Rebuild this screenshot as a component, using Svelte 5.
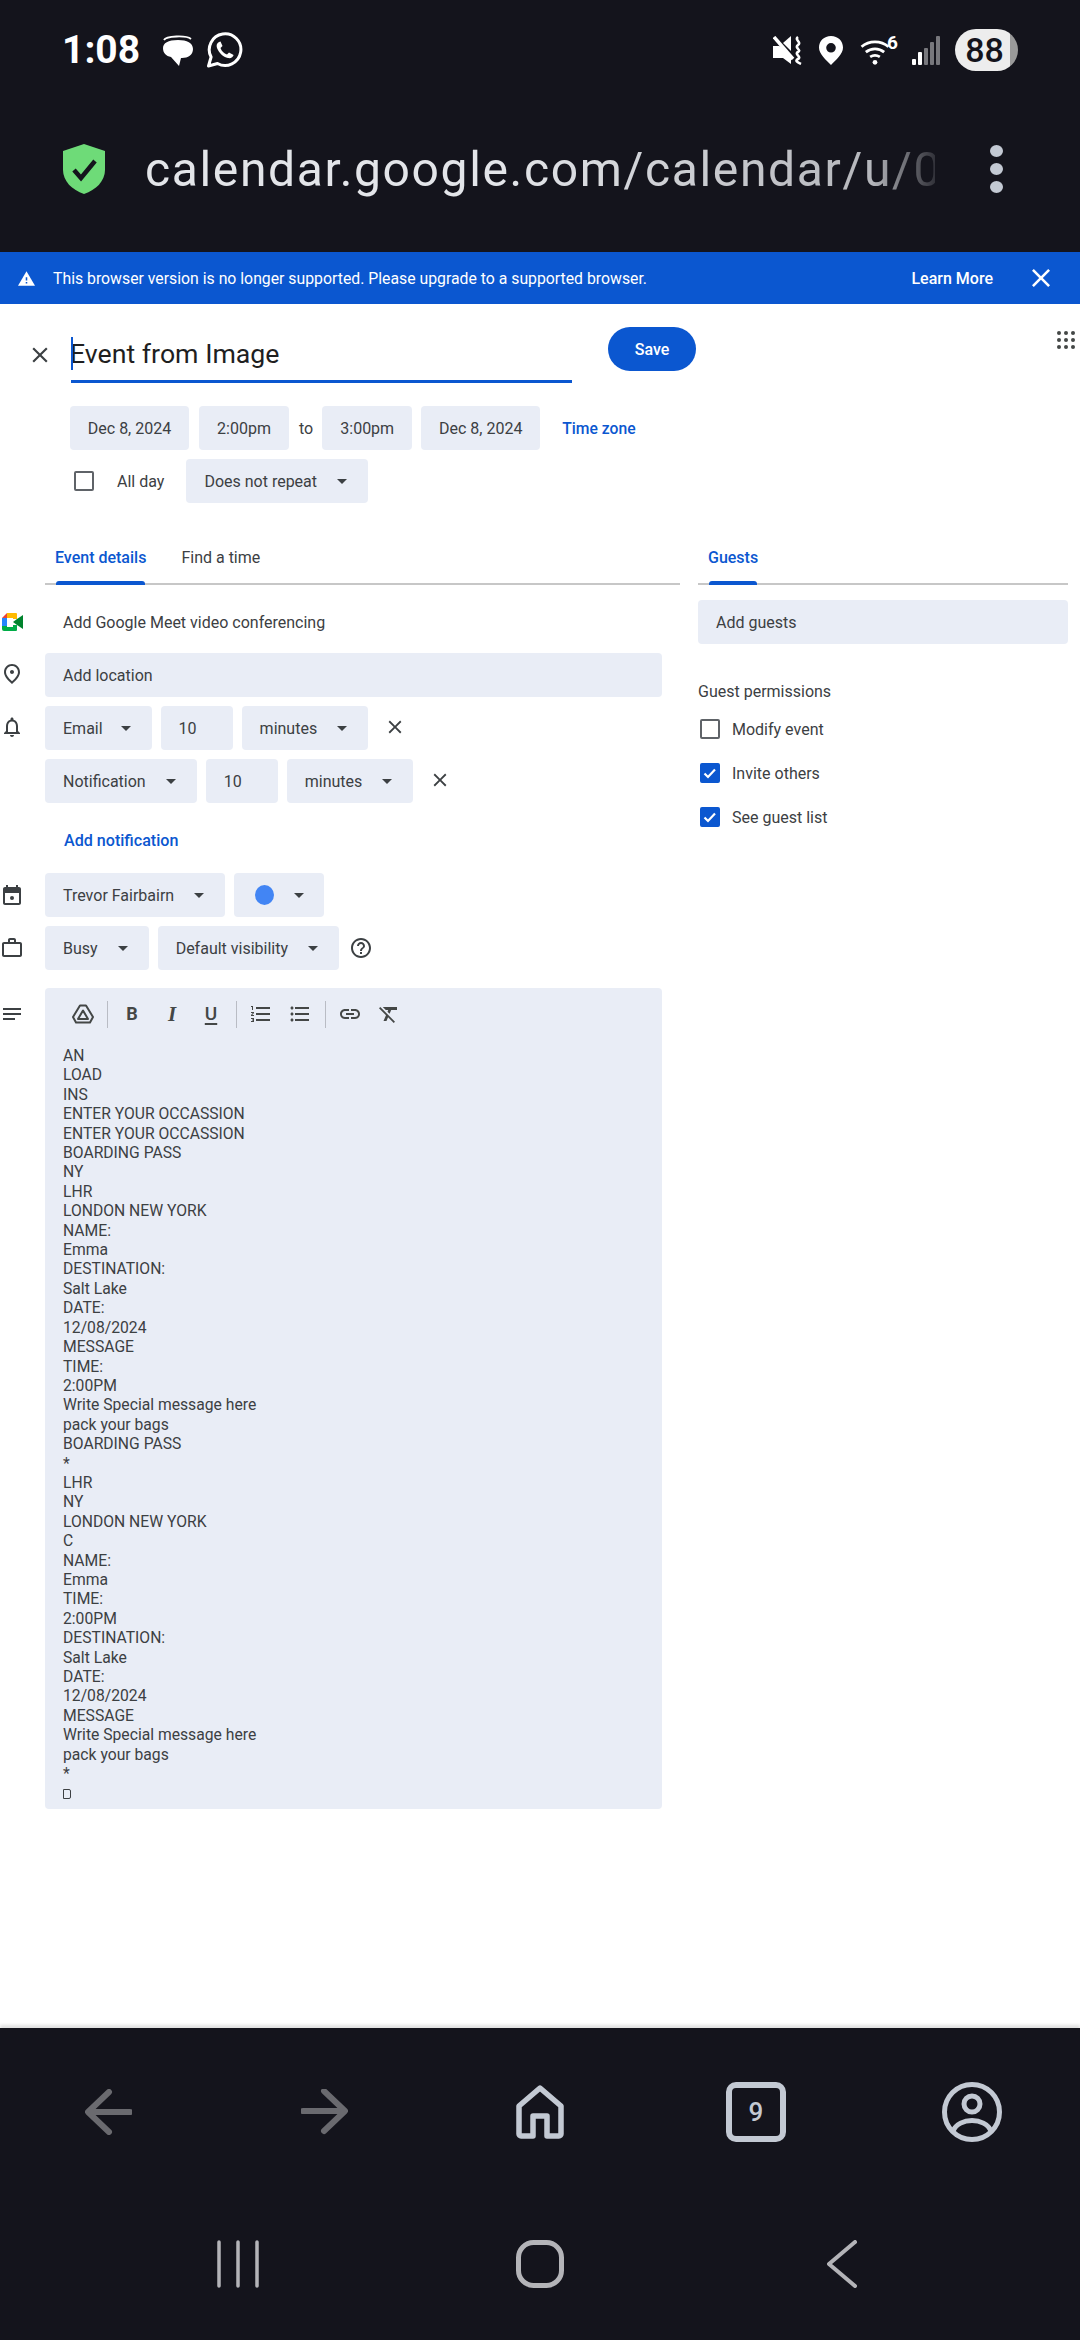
<script>
  const bodyLines = [
    "AN", "LOAD", "INS", "ENTER YOUR OCCASSION", "ENTER YOUR OCCASSION", "BOARDING PASS", "NY", "LHR",
    "LONDON NEW YORK", "NAME:", "Emma", "DESTINATION:", "Salt Lake", "DATE:", "12/08/2024", "MESSAGE",
    "TIME:", "2:00PM", "Write Special message here", "pack your bags", "BOARDING PASS", "*", "LHR", "NY",
    "LONDON NEW YORK", "C", "NAME:", "Emma", "TIME:", "2:00PM", "DESTINATION:", "Salt Lake", "DATE:",
    "12/08/2024", "MESSAGE", "Write Special message here", "pack your bags", "*"
  ];

  const guestPerms = [
    { label: "Modify event", checked: false },
    { label: "Invite others", checked: true },
    { label: "See guest list", checked: true }
  ];

  const closePath = "M19 6.41L17.59 5 12 10.59 6.41 5 5 6.41 10.59 12 5 17.59 6.41 19 12 13.41 17.59 19 19 17.59 13.41 12z";
</script>

<div class="screen">
  <header class="top">
    <div class="status">
      <span class="time">1:08</span>
      <svg class="chat" viewBox="0 0 35 34" width="35" height="34">
        <path d="M4 6C6 2 26 1 31 5" fill="none" stroke="#fff" stroke-width="1.800" />
        <path d="M3 14C3 9 8 6 18 6c9 0 15 3 15 9 0 6-5 9-11 9h-1l-2 8-8-9C6 22 3 19 3 14z" fill="#fff" />
      </svg>
      <svg class="wa" viewBox="0 0 37 36" width="37" height="36">
        <path d="M2.500 34l2.600-9A15.800 15.800 0 1 1 11.500 31.500z" fill="none" stroke="#fff" stroke-width="3" stroke-linejoin="round" />
        <path d="M13 10c-2 1-3 3-2 6 2 5 6 9 11 10 3 .6 5-1 5.600-3l-4.600-2.500-2 2c-3-1-5.500-3.500-6.500-6.500l2-2-2-4.500z" fill="#fff" />
      </svg>
      <div class="status-right">
        <svg viewBox="0 0 29 29" width="29" height="29">
          <path d="M0 10h6l3 1 9 10v7l-8-6H0z" fill="#fff" />
          <path d="M10 7l8-7v15z" fill="#fff" />
          <path d="M1 1l19 22" stroke="#fff" stroke-width="3.500" />
          <path d="M25 1c-4 3 4 5 0 8s4 5 0 7 4 5 0 7 1 4 3 5" fill="none" stroke="#fff" stroke-width="2.600" />
        </svg>
        <svg viewBox="0 0 24 29" width="24" height="29">
          <path fill-rule="evenodd" d="M12 0c7 0 12 5 12 11.500C24 18 17 24 12 29 7 24 0 18 0 11.500 0 5 5 0 12 0zm0 7a4.800 4.800 0 1 0 0 9.600A4.800 4.800 0 0 0 12 7z" fill="#fff" />
        </svg>
        <div class="wifi">
          <svg viewBox="0 0 27 26" width="30" height="28">
            <path d="M1 9c7-6 18-6 25 0M5 14c5-4 12-4 17 0M9 18.500c3-2 6-2 9 0" fill="none" stroke="#fff" stroke-width="2.600" />
            <circle cx="13.500" cy="23.500" r="2.200" fill="#fff" />
          </svg>
          <span>6</span>
        </div>
        <div class="signal">
          <i style="height:6px;background:#fff"></i>
          <i style="height:13px;background:#fff"></i>
          <i style="height:17px"></i>
          <i style="height:23px"></i>
          <i style="height:29px"></i>
        </div>
        <div class="battery">88</div>
      </div>
    </div>
    <div class="urlbar">
      <svg viewBox="0 0 42 50" width="42" height="50">
        <path d="M21 0l21 7v19c0 11-9 20-21 24C9 46 0 37 0 26V7z" fill="#6edb78" />
        <path d="M11 26l7 8 14-17" fill="none" stroke="#14141c" stroke-width="4.500" />
      </svg>
      <div class="url">calendar.google.com/calendar/u/0</div>
      <div class="dots"><i></i><i></i><i></i></div>
    </div>
  </header>

  <div class="banner">
    <svg viewBox="1 2 22 19" width="17" height="15">
      <path d="M1 21h22L12 2 1 21z" fill="#fff" />
      <path d="M13 18h-2v-2h2v2zm0-4h-2v-4h2v4z" fill="#0b57d0" />
    </svg>
    <span class="banner-text">This browser version is no longer supported. Please upgrade to a supported browser.</span>
    <span class="learn">Learn More</span>
    <svg viewBox="5 5 14 14" width="18" height="18"><path d={closePath} fill="#fff" /></svg>
  </div>

  <main class="editor">
    <div class="head">
      <div class="close">
        <svg viewBox="0 0 24 24" width="26" height="26"><path d={closePath} fill="#3c4043" /></svg>
      </div>
      <div class="title">
        <span class="cursor"></span>
        Event from Image
      </div>
      <button class="save">Save</button>
      <svg class="apps" viewBox="0 0 18 18" width="18" height="18">
        {#each [2, 9, 16] as y}
          {#each [2, 9, 16] as x}
            <circle cx={x} cy={y} r="2" fill="#444746" />
          {/each}
        {/each}
      </svg>
    </div>

    <div class="dates">
      <div class="chip date">Dec 8, 2024</div>
      <div class="chip hour">2:00pm</div>
      <span class="to">to</span>
      <div class="chip hour">3:00pm</div>
      <div class="chip date">Dec 8, 2024</div>
      <span class="link tz">Time zone</span>
    </div>

    <div class="allday">
      <span class="check"></span>
      <span class="allday-label">All day</span>
      <div class="chip select">Does not repeat <b class="caret"></b></div>
    </div>

    <div class="cols">
      <section class="left">
        <div class="tabs">
          <span class="tab active">Event details</span>
          <span class="tab">Find a time</span>
        </div>

        <div class="row first">
          <div class="gut">
            <svg viewBox="0 0 21 18" width="21" height="18">
              <path d="M0 5l5-5v5z" fill="#ea4335" />
              <path d="M0 5h5v8H0z" fill="#2684fc" />
              <path d="M5 0h9a1 1 0 0 1 1 1v5h-4V5H5z" fill="#ffba00" />
              <path d="M0 13h5v1h6v-2h4v5a1 1 0 0 1-1 1H2a2 2 0 0 1-2-2z" fill="#00ac47" />
              <path d="M11 9l4-3 6-4v14l-6-4z" fill="#00832d" />
            </svg>
          </div>
          <span class="plain">Add Google Meet video conferencing</span>
        </div>

        <div class="row">
          <div class="gut up">
            <svg viewBox="0 0 24 24" width="24" height="24"><path d="M12 12c-1.100 0-2-.9-2-2s.9-2 2-2 2 .9 2 2-.9 2-2 2zm6-1.800C18 6.570 15.350 4 12 4s-6 2.570-6 6.200c0 2.340 1.950 5.440 6 9.140 4.050-3.700 6-6.800 6-9.140zM12 2c4.200 0 8 3.220 8 8.200 0 3.320-2.670 7.250-8 11.800-5.330-4.550-8-8.480-8-11.800C4 5.220 7.800 2 12 2z" fill="#3c4043" /></svg>
          </div>
          <div class="chip wide">Add location</div>
        </div>

        <div class="row">
          <div class="gut up">
            <svg viewBox="0 0 24 24" width="24" height="24"><path d="M12 22c1.100 0 2-.9 2-2h-4c0 1.100.9 2 2 2zm6-6v-5c0-3.070-1.630-5.640-4.500-6.320V4c0-.83-.67-1.500-1.500-1.500s-1.500.67-1.500 1.500v.68C7.640 5.360 6 7.920 6 11v5l-2 2v1h16v-1l-2-2zm-2 1H8v-6c0-2.480 1.510-4.500 4-4.500s4 2.020 4 4.500v6z" fill="#3c4043" /></svg>
          </div>
          <div class="chip select short">Email <b class="caret"></b></div>
          <div class="chip num">10</div>
          <div class="chip select">minutes <b class="caret"></b></div>
          <svg class="rm" viewBox="0 0 24 24" width="22" height="22"><path d={closePath} fill="#3c4043" /></svg>
        </div>

        <div class="row">
          <div class="gut"></div>
          <div class="chip select">Notification <b class="caret"></b></div>
          <div class="chip num">10</div>
          <div class="chip select">minutes <b class="caret"></b></div>
          <svg class="rm" viewBox="0 0 24 24" width="22" height="22"><path d={closePath} fill="#3c4043" /></svg>
        </div>

        <div class="row addn">
          <div class="gut"></div>
          <span class="link addn-link">Add notification</span>
        </div>

        <div class="row owner">
          <div class="gut">
            <svg viewBox="0 0 24 24" width="24" height="24">
              <path fill-rule="evenodd" d="M16 2v2H8V2H6v2H5C3.900 4 3 4.900 3 6v14c0 1.100.9 2 2 2h14c1.100 0 2-.9 2-2V6c0-1.100-.9-2-2-2h-1V2zM5 10h14v10H5z" fill="#3c4043" />
              <circle cx="12" cy="15" r="2" fill="#3c4043" />
            </svg>
          </div>
          <div class="chip select">Trevor Fairbairn <b class="caret"></b></div>
          <div class="chip select colour"><span class="dot"></span><b class="caret"></b></div>
        </div>

        <div class="row">
          <div class="gut">
            <svg viewBox="0 0 24 24" width="24" height="24"><path d="M14 6V4h-4v2h4zM4 8v11h16V8H4zm16-2c1.110 0 2 .89 2 2v11c0 1.110-.89 2-2 2H4c-1.110 0-2-.89-2-2l.01-11c0-1.110.88-2 1.990-2h4V4c0-1.110.89-2 2-2h4c1.110 0 2 .89 2 2v2h4z" fill="#3c4043" /></svg>
          </div>
          <div class="chip select">Busy <b class="caret"></b></div>
          <div class="chip select">Default visibility <b class="caret"></b></div>
          <svg class="help" viewBox="0 0 24 24" width="24" height="24"><path d="M11 18h2v-2h-2v2zm1-16C6.480 2 2 6.480 2 12s4.480 10 10 10 10-4.480 10-10S17.520 2 12 2zm0 18c-4.410 0-8-3.590-8-8s3.590-8 8-8 8 3.590 8 8-3.590 8-8 8zm0-14c-2.210 0-4 1.790-4 4h2c0-1.100.9-2 2-2s2 .9 2 2c0 2-3 1.750-3 5h2c0-2.250 3-2.500 3-5 0-2.210-1.790-4-4-4z" fill="#3c4043" /></svg>
        </div>

        <div class="row desc">
          <div class="gut notes">
            <svg viewBox="0 0 24 24" width="24" height="24"><path d="M3 18h12v-2H3v2zM3 6v2h18V6H3zm0 7h18v-2H3v2z" fill="#3c4043" /></svg>
          </div>
          <div class="descbox">
            <div class="toolbar">
              <svg class="t-drive" viewBox="0 0 24 24" width="24" height="24">
                <path d="M9 3.500h6l7 11.500-3 5.500H5L2 15zM12 8.500l-5 8.500h10z" fill="none" stroke="#444746" stroke-width="2" stroke-linejoin="round" />
              </svg>
              <span class="sep s1"></span>
              <span class="t-b">B</span>
              <span class="t-i">I</span>
              <span class="t-u">U</span>
              <span class="sep s2"></span>
              <svg class="t-ol" viewBox="0 0 24 24" width="24" height="24"><path d="M2 17h2v.5H3v1h1v.5H2v1h3v-4H2v1zm1-9h1V4H2v1h1v3zm-1 3h1.800L2 13.100v.9h3v-1H3.200L5 10.900V10H2v1zm5-6v2h14V5H7zm0 14h14v-2H7v2zm0-6h14v-2H7v2z" fill="#444746" /></svg>
              <svg class="t-ul" viewBox="0 0 24 24" width="24" height="24"><path d="M4 10.500c-.83 0-1.500.67-1.500 1.500s.67 1.500 1.500 1.500 1.500-.67 1.500-1.500-.67-1.500-1.500-1.500zm0-6c-.83 0-1.500.67-1.500 1.500S3.170 7.500 4 7.500 5.500 6.830 5.500 6 4.830 4.500 4 4.500zm0 12c-.83 0-1.500.68-1.500 1.500s.68 1.500 1.500 1.500 1.500-.68 1.500-1.500-.67-1.500-1.500-1.500zM7 19h14v-2H7v2zm0-6h14v-2H7v2zm0-8v2h14V5H7z" fill="#444746" /></svg>
              <span class="sep s3"></span>
              <svg class="t-link" viewBox="0 0 24 24" width="24" height="24"><path d="M3.900 12c0-1.710 1.390-3.100 3.100-3.100h4V7H7c-2.760 0-5 2.240-5 5s2.240 5 5 5h4v-1.900H7c-1.710 0-3.100-1.390-3.100-3.100zM8 13h8v-2H8v2zm9-6h-4v1.900h4c1.710 0 3.100 1.390 3.100 3.100s-1.390 3.100-3.100 3.100h-4V17h4c2.760 0 5-2.240 5-5s-2.240-5-5-5z" fill="#444746" /></svg>
              <svg class="t-clear" viewBox="0 0 24 24" width="24" height="24"><path d="M3.270 5L2 6.270l6.970 6.970L6.500 19h3l1.570-3.660L16.730 21 18 19.730 3.550 5.270 3.270 5zM6 5v.18L8.820 8h2.400l-.72 1.680 2.100 2.100L14.210 8H20V5H6z" fill="#444746" /></svg>
            </div>
            <div class="lines">
              {#each bodyLines as line}
                <div>{line}</div>
              {/each}
              <div class="lastline"><span class="tofu"></span></div>
            </div>
          </div>
        </div>
      </section>

      <section class="right">
        <div class="tabs">
          <span class="tab active">Guests</span>
        </div>
        <div class="chip guests">Add guests</div>
        <div class="perm-title">Guest permissions</div>
        {#each guestPerms as perm}
          <div class="perm">
            <span class="check" class:on={perm.checked}>
              {#if perm.checked}
                <svg viewBox="0 0 20 20" width="20" height="20"><path d="M4.500 10.500l3.500 3.500 7-7.500" fill="none" stroke="#fff" stroke-width="2.200" /></svg>
              {/if}
            </span>
            <span>{perm.label}</span>
          </div>
        {/each}
      </section>
    </div>
  </main>

  <footer class="bottom">
    <div class="browser-nav">
      <div class="cell">
        <svg viewBox="0 0 47 46" width="47" height="46"><path d="M45 23H5M24 3L3 23l21 20" fill="none" stroke="#6a6a6f" stroke-width="6" stroke-linecap="round" stroke-linejoin="round" /></svg>
      </div>
      <div class="cell">
        <svg viewBox="0 0 47 46" width="47" height="46"><path d="M2 22h40M23 2l21 20-21 20" fill="none" stroke="#6a6a6f" stroke-width="6" stroke-linecap="round" stroke-linejoin="round" /></svg>
      </div>
      <div class="cell">
        <svg viewBox="0 0 48 54" width="48" height="54"><path d="M24 3l21 18v28a2 2 0 0 1-2 2H31V31H17v20H5a2 2 0 0 1-2-2V21z" fill="none" stroke="#c3c9d3" stroke-width="5.500" stroke-linejoin="round" /></svg>
      </div>
      <div class="cell"><div class="tabcount">9</div></div>
      <div class="cell">
        <svg viewBox="0 0 60 60" width="60" height="60">
          <circle cx="30" cy="30" r="27.500" fill="none" stroke="#c3c9d3" stroke-width="5" />
          <circle cx="30" cy="22" r="8" fill="none" stroke="#c3c9d3" stroke-width="5" />
          <path d="M11 49c6-14 32-14 38 0" fill="none" stroke="#c3c9d3" stroke-width="5" />
        </svg>
      </div>
    </div>
    <div class="system-nav">
      <div class="cell">
        <svg viewBox="0 0 44 48" width="44" height="48"><path d="M3 2v44M22 2v44M41 2v44" stroke="#b4b4b8" stroke-width="3.500" stroke-linecap="round" /></svg>
      </div>
      <div class="cell">
        <svg viewBox="0 0 48 48" width="48" height="48"><rect x="2.500" y="2.500" width="43" height="43" rx="15" fill="none" stroke="#b4b4b8" stroke-width="5" /></svg>
      </div>
      <div class="cell">
        <svg viewBox="0 0 30 48" width="30" height="48"><path d="M28 2L2 24l26 22" fill="none" stroke="#b4b4b8" stroke-width="4" stroke-linecap="round" stroke-linejoin="round" /></svg>
      </div>
    </div>
  </footer>
</div>

<style>
  :global(body) {
    margin: 0;
    background: #fff;
  }

  .screen {
    width: 1080px;
    height: 2340px;
    display: flex;
    flex-direction: column;
    overflow: hidden;
    font-family: Roboto, "Liberation Sans", sans-serif;
    color: #3c4043;
    font-size: 16px;
  }

  /* top chrome */
  .top {
    height: 252px;
    background: #14141c;
    flex: none;
  }
  .status {
    height: 100px;
    display: flex;
    align-items: center;
    padding: 0 62px;
    color: #fff;
  }
  .time {
    font-size: 39px;
    font-weight: 700;
    width: 79px;
  }
  .chat { margin-left: 19px; margin-top: 2px; }
  .wa { margin-left: 11px; }
  .status-right {
    margin-left: auto;
    display: flex;
    align-items: center;
  }
  .status-right > svg:first-child { margin-right: 17px; }
  .status-right > svg:nth-child(2) { margin-right: 17px; }
  .wifi {
    position: relative;
    width: 38px;
    height: 30px;
    margin-right: 14px;
  }
  .wifi span {
    position: absolute;
    right: 0;
    top: -4px;
    font-size: 19px;
    font-weight: 700;
  }
  .wifi svg { position: absolute; left: 0; top: 2px; }
  .signal {
    display: flex;
    align-items: flex-end;
    gap: 2px;
    height: 29px;
    margin-right: 15px;
  }
  .signal i {
    width: 4px;
    background: #77777c;
    border-radius: 1px;
  }
  .battery {
    width: 63px;
    height: 42px;
    border-radius: 21px;
    background: linear-gradient(90deg, #ededed 87%, #9a9a9a 87%);
    color: #14141c;
    font-size: 34px;
    font-weight: 500;
    line-height: 42px;
    text-align: center;
    padding-right: 4px;
    box-sizing: border-box;
  }
  .urlbar {
    height: 138px;
    display: flex;
    align-items: center;
    padding-left: 63px;
  }
  .url {
    margin-left: 40px;
    width: 790px;
    overflow: hidden;
    white-space: nowrap;
    font-size: 48px;
    letter-spacing: 1.650px;
    color: #e3e5e9;
    -webkit-mask-image: linear-gradient(90deg, #000 45%, rgba(0, 0, 0, 0.78) 92%, rgba(0, 0, 0, 0.15) 100%);
    mask-image: linear-gradient(90deg, #000 45%, rgba(0, 0, 0, 0.78) 92%, rgba(0, 0, 0, 0.15) 100%);
  }
  .dots {
    margin-left: 55px;
    display: flex;
    flex-direction: column;
    gap: 6px;
  }
  .dots i {
    width: 13px;
    height: 12px;
    border-radius: 50%;
    background: #c3c9d3;
  }

  /* banner */
  .banner {
    height: 52px;
    flex: none;
    background: #0b57d0;
    color: #fff;
    display: flex;
    align-items: center;
    padding: 0 30px 0 18px;
  }
  .banner-text {
    margin-left: 18px;
    font-size: 15.800px;
  }
  .learn {
    margin-left: auto;
    margin-right: 39px;
    font-weight: 500;
    font-size: 16px;
  }

  /* editor */
  .editor {
    flex: 1;
    background: #fff;
  }
  .head {
    display: flex;
    align-items: flex-start;
    height: 102px;
  }
  .close {
    width: 70px;
    flex: none;
    padding: 38px 0 0 27px;
    box-sizing: border-box;
  }
  .title {
    position: relative;
    margin: 16px 0 0 1px;
    width: 501px;
    height: 60px;
    border-bottom: 3px solid #0b57d0;
    box-sizing: content-box;
    font-size: 26.700px;
    line-height: 69px;
    text-indent: -1px;
    color: #1f1f1f;
  }
  .cursor {
    position: absolute;
    left: 0;
    top: 17px;
    width: 1.500px;
    height: 33px;
    background: #0b57d0;
  }
  .save {
    margin: 23px 0 0 36px;
    width: 88px;
    height: 44px;
    border: none;
    border-radius: 22px;
    background: #0b57d0;
    color: #fff;
    font: 500 16px Roboto, sans-serif;
  }
  .apps { margin: 27px 5px 0 auto; }

  .chip {
    height: 44px;
    border-radius: 4px;
    background: #e9edf6;
    display: flex;
    align-items: center;
    box-sizing: border-box;
    flex: none;
    white-space: nowrap;
  }
  .select {
    padding: 0 21px 0 18px;
    gap: 20px;
    justify-content: space-between;
  }
  .select.short { gap: 18px; }
  .caret {
    width: 0;
    height: 0;
    border-left: 5px solid transparent;
    border-right: 5px solid transparent;
    border-top: 5px solid #3c4043;
  }
  .link {
    color: #0b57d0;
    font-weight: 500;
  }

  .dates {
    display: flex;
    align-items: center;
    margin-left: 70px;
  }
  .date {
    width: 119px;
    justify-content: center;
    margin-right: 10px;
  }
  .hour {
    width: 90px;
    justify-content: center;
    margin-right: 9px;
  }
  .to { margin: 0 9px 0 1px; }
  .tz { margin-left: 12px; font-size: 15.700px; }

  .allday {
    display: flex;
    align-items: center;
    margin: 9px 0 0 74px;
  }
  .check {
    width: 20px;
    height: 20px;
    box-sizing: border-box;
    border: 2px solid #5f6368;
    border-radius: 2px;
    flex: none;
    position: relative;
  }
  .check.on {
    background: #0b57d0;
    border-color: #0b57d0;
  }
  .check.on svg {
    position: absolute;
    left: -2px;
    top: -2px;
  }
  .allday-label { margin: 0 22px 0 23px; }

  .cols {
    display: flex;
    margin-top: 27px;
  }
  .left {
    width: 680px;
    flex: none;
  }
  .right {
    width: 370px;
    margin-left: 18px;
    flex: none;
  }
  .tabs {
    height: 55px;
    box-sizing: border-box;
    margin-left: 45px;
    border-bottom: 2px solid #c7c7c7;
    display: flex;
    gap: 35px;
    padding-left: 10px;
  }
  .right .tabs { margin-left: 0; }
  .tab {
    height: 55px;
    padding-top: 18px;
    box-sizing: border-box;
  }
  .tab.active {
    color: #0b57d0;
    position: relative;
    font-weight: 500;
  }
  .tab.active::after {
    content: "";
    position: absolute;
    left: 1px;
    right: 1px;
    bottom: 0;
    height: 4px;
    border-radius: 3px 3px 0 0;
    background: #0b57d0;
  }

  .row {
    display: flex;
    align-items: center;
    gap: 9px;
    margin-top: 9px;
    min-height: 44px;
  }
  .row.first { margin-top: 15px; }
  .gut {
    width: 45px;
    margin-right: -9px;
    flex: none;
    display: flex;
    justify-content: center;
    padding-right: 21px;
    box-sizing: border-box;
  }
  .gut.up { margin-top: -2px; }
  .plain { margin-left: 18px; }
  .wide {
    width: 617px;
    padding-left: 18px;
  }
  .num {
    width: 72px;
    padding-left: 18px;
  }
  .rm { margin-left: 7px; margin-top: -3px; }
  .addn { margin-top: 15px; }
  .addn-link { margin-left: 19px; font-size: 16.100px; }
  .owner { margin-top: 11px; }
  .colour {
    padding: 0 20px 0 21px;
    width: 90px;
  }
  .dot {
    width: 20px;
    height: 20px;
    border-radius: 50%;
    background: #4285f4;
  }
  .help { margin-left: 1px; }

  .desc {
    align-items: flex-start;
    margin-top: 18px;
  }
  .notes { margin-top: 14px; }
  .descbox {
    width: 617px;
    height: 821px;
    background: #e9edf6;
    border-radius: 4px;
  }
  .toolbar {
    position: relative;
    height: 58px;
    display: flex;
    align-items: center;
  }
  .toolbar > * { position: absolute; }
  .t-drive { left: 26px; top: 14px; }
  .sep {
    width: 1px;
    height: 27px;
    top: 13px;
    background: #b9bcc4;
  }
  .s1 { left: 62px; }
  .s2 { left: 191px; }
  .s3 { left: 280px; }
  .t-b, .t-i, .t-u {
    top: 14px;
    width: 24px;
    text-align: center;
    line-height: 24px;
    color: #444746;
    font-size: 18px;
    font-weight: 700;
  }
  .t-b { left: 75px; }
  .t-i {
    left: 115px;
    font-style: italic;
    font-family: "Liberation Serif", serif;
    font-size: 21px;
  }
  .t-u {
    left: 154px;
    text-decoration: underline;
    text-decoration-thickness: 2px;
    text-underline-offset: 3px;
    font-weight: 500;
    font-size: 19px;
  }
  .t-ol { left: 204px; top: 14px; }
  .t-ul { left: 243px; top: 14px; }
  .t-link { left: 293px; top: 14px; }
  .t-clear { left: 332px; top: 14px; }
  .lines {
    padding-left: 18px;
    line-height: 19.400px;
    font-size: 15.700px;
  }
  .lastline { margin-top: 1px; }
  .tofu {
    display: inline-block;
    width: 6px;
    height: 8px;
    border: 1.500px solid #3c4043;
    border-radius: 0 2px 2px 0;
  }

  .guests {
    margin-top: 15px;
    width: 370px;
    padding-left: 18px;
  }
  .perm-title { margin-top: 38px; line-height: 20px; }
  .perm {
    display: flex;
    align-items: center;
    gap: 12px;
    height: 44px;
    padding-left: 2px;
  }
  .perm-title + .perm { margin-top: 5px; }

  /* bottom chrome */
  .bottom {
    height: 312px;
    flex: none;
    background: #14141c;
    box-shadow: 0 -3px 3px rgba(0, 0, 0, 0.12);
    position: relative;
  }
  .browser-nav {
    height: 168px;
    display: grid;
    grid-template-columns: repeat(5, 1fr);
  }
  .system-nav {
    height: 136px;
    padding: 0 87px;
    display: grid;
    grid-template-columns: repeat(3, 1fr);
  }
  .cell {
    display: flex;
    align-items: center;
    justify-content: center;
  }
  .tabcount {
    width: 60px;
    height: 60px;
    box-sizing: border-box;
    border: 6px solid #c3c9d3;
    border-radius: 10px;
    color: #c3c9d3;
    font-size: 26px;
    font-weight: 500;
    text-align: center;
    line-height: 48px;
  }
</style>
